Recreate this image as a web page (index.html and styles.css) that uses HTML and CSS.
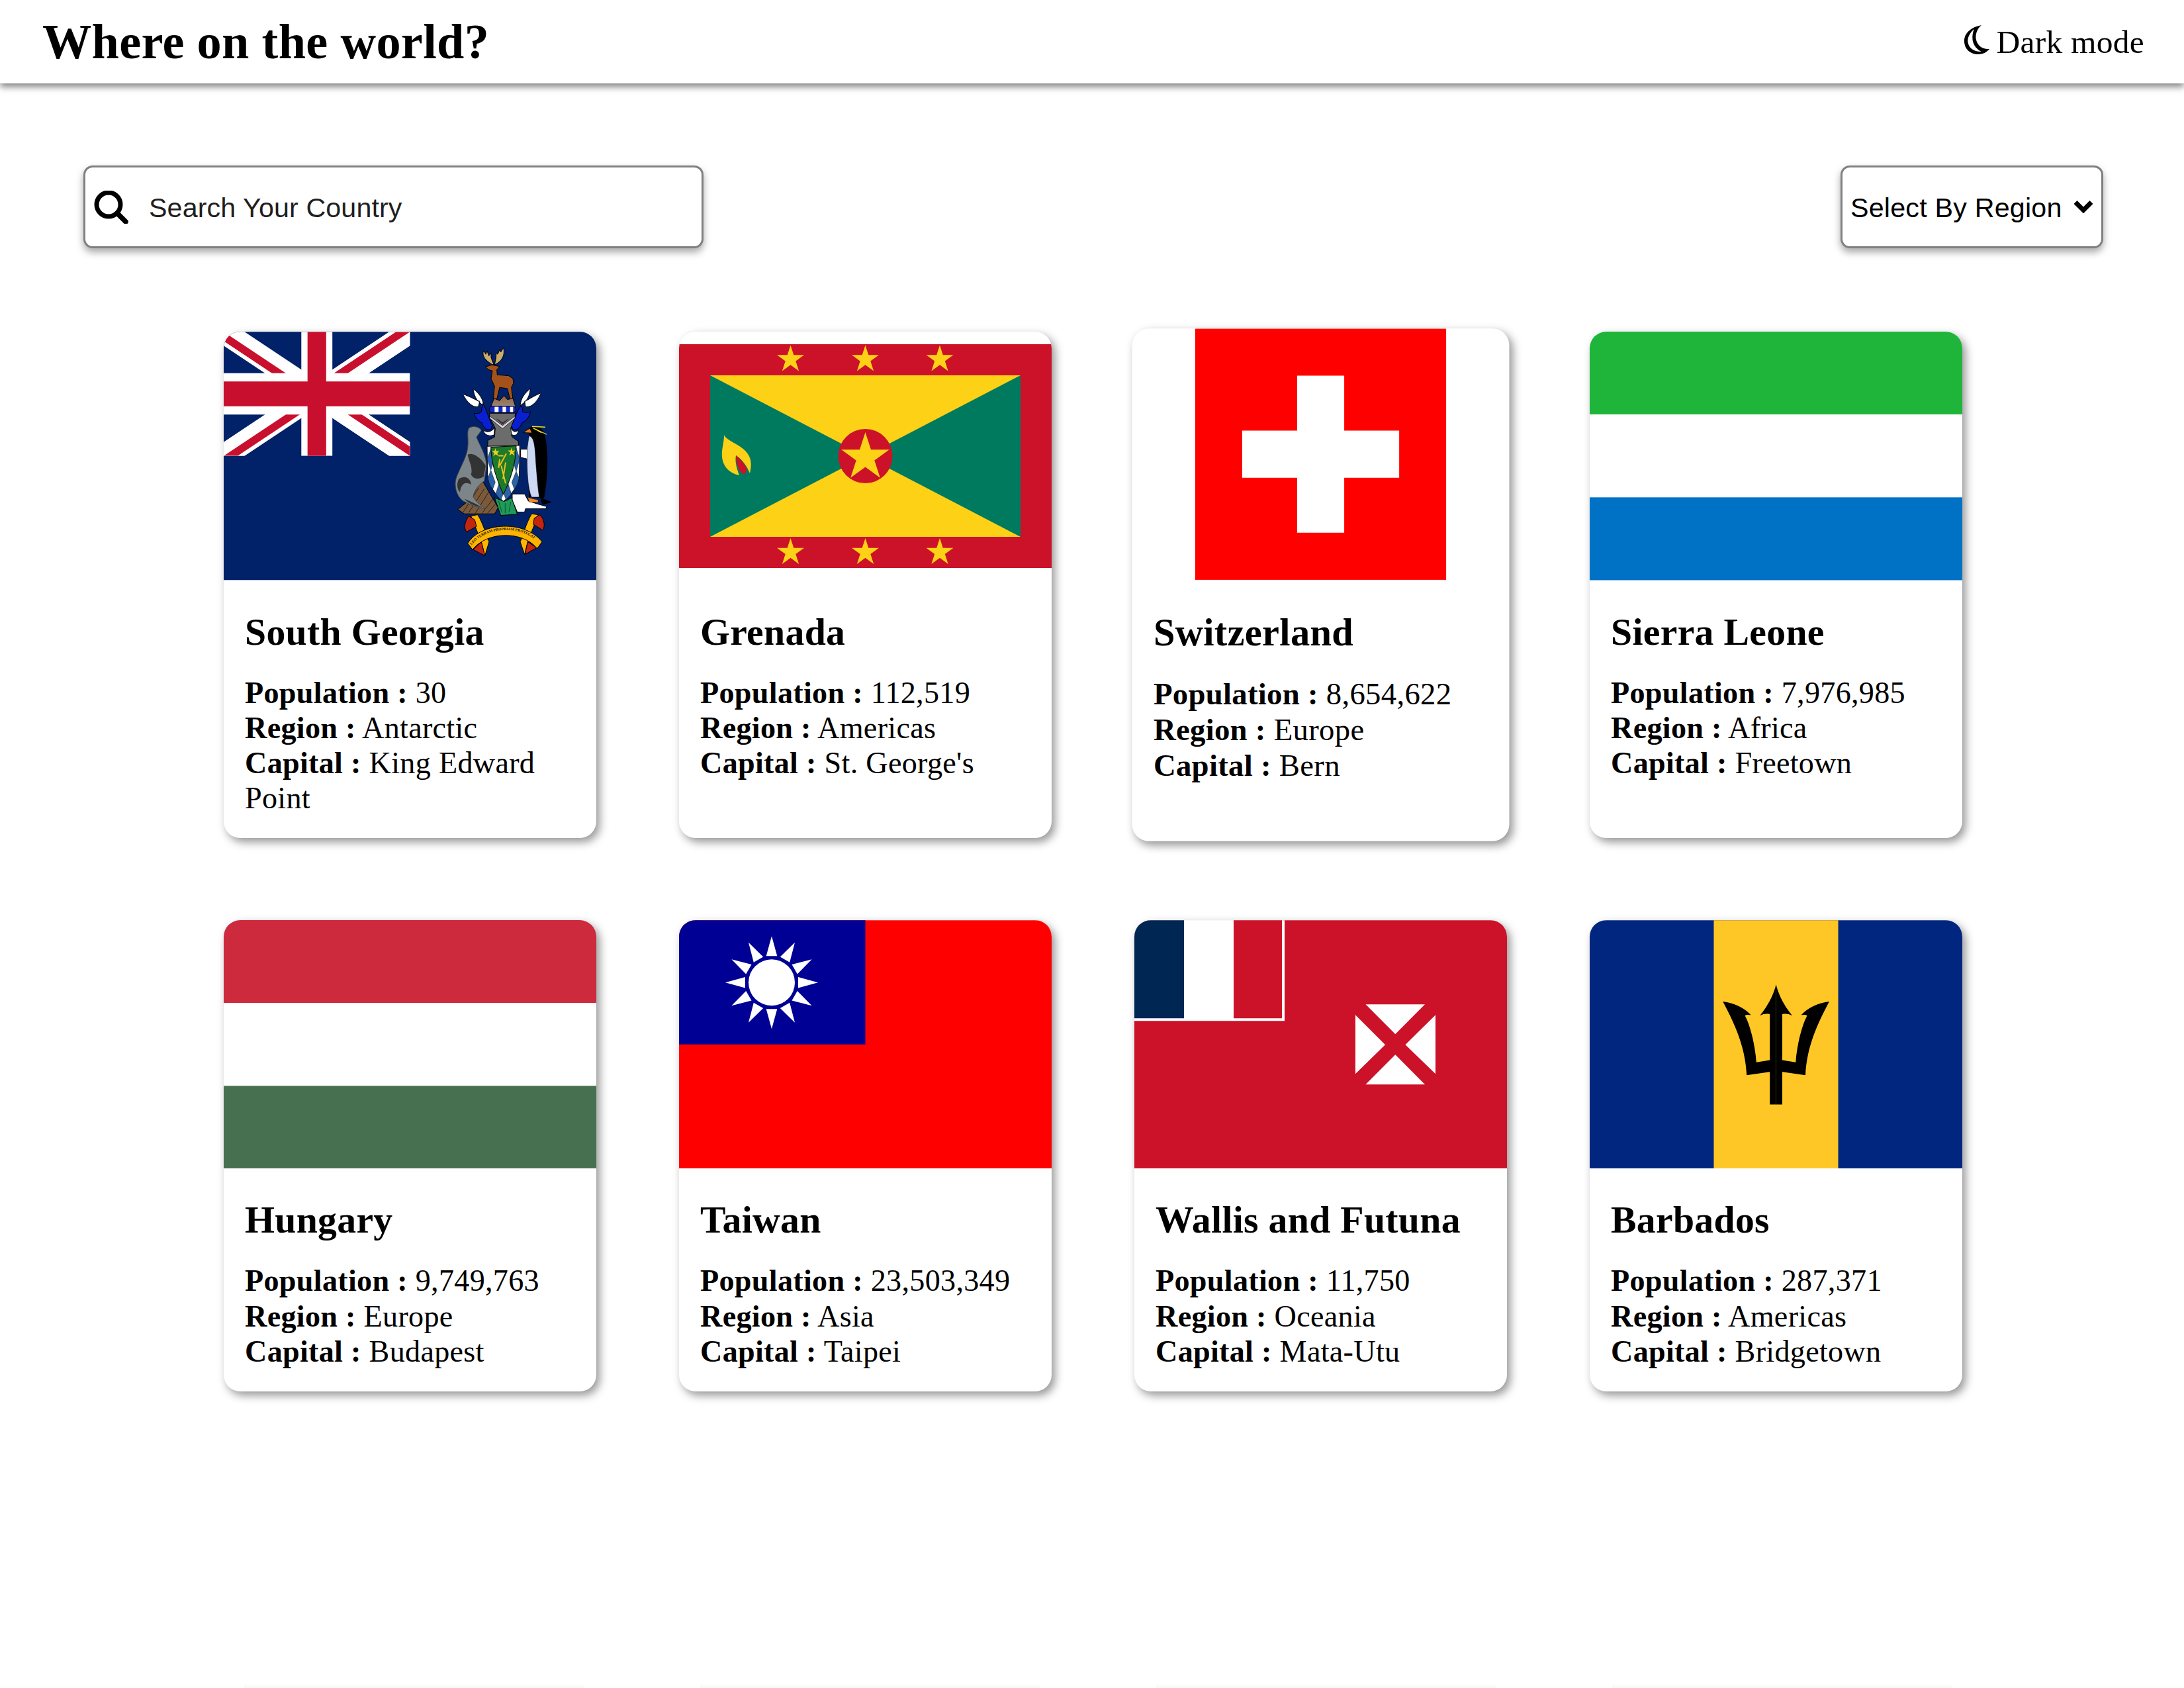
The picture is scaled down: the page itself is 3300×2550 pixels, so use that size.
FILE: index.html
```html
<!DOCTYPE html>
<html lang="en">
<head>
<meta charset="utf-8">
<title>Where on the world?</title>
<link rel="stylesheet" href="styles.css">
</head>
<body>
<header class="topbar">
  <h1 class="brand">Where on the world?</h1>
  <div class="mode">
    <svg class="moon" viewBox="0 0 38 44"><path d="M26 0C10 3 0 12 0 24c0 12 9 20 21 20 7 0 13-3 17-8-10 1-19-5-20.500-16C17 12 20 5 26 0z" fill="#000"/><path d="M15 6C7.500 12 4.500 20 5.500 26c1.500 9 9.500 14.500 20.500 14-7-3-12.500-10-13.500-18-.5-6 0-11 2.500-16z" fill="#fff"/></svg>
    <span>Dark mode</span>
  </div>
</header>

<section class="controls">
  <label class="search">
    <svg class="search-icon" viewBox="0 0 52 50"><circle cx="22" cy="21" r="18" fill="none" stroke="#000" stroke-width="7"/><path d="M35 34l13 13" stroke="#000" stroke-width="7.500" stroke-linecap="round"/></svg>
    <input class="search-input" type="text" placeholder="Search Your Country">
  </label>
  <div class="region">
    <select class="region-select"><option>Select By Region</option></select>
    <svg class="chevron" viewBox="0 0 30 20"><path d="M3 3.500l12 12 12-12" fill="none" stroke="#000" stroke-width="7"/></svg>
  </div>
</section>

<main class="grid">
  <article class="card">
    <div class="flag">
      <svg class="flag-wide" viewBox="0 0 563 375">
        <defs>
          <clipPath id="ujs"><path d="M0 0v30h60V0z"/></clipPath>
          <clipPath id="ujt"><path d="M30 15h30v15zv15H0zH0V0zV0h30z"/></clipPath>
          <path id="arc" d="M218 1000C280 915 450 905 525 995"/>
          <linearGradient id="mtn" x1="0" y1="0" x2="0" y2="1"><stop offset="0" stop-color="#a8602c"/><stop offset="1" stop-color="#8a8a8a"/></linearGradient>
          <clipPath id="shield"><path d="M288 552L436 548 434 680C430 730 400 770 362 802 325 770 295 730 290 680z"/></clipPath>
        </defs>
        <rect width="563" height="375" fill="#012169"/>
        <svg x="0" y="0" width="281.500" height="187.500" viewBox="0 0 60 30" preserveAspectRatio="none">
          <g clip-path="url(#ujs)">
            <path d="M0 0l60 30M60 0L0 30" stroke="#fff" stroke-width="6"/>
            <path d="M0 0l60 30M60 0L0 30" clip-path="url(#ujt)" stroke="#c8102e" stroke-width="4"/>
            <path d="M30 0v30M0 15h60" stroke="#fff" stroke-width="10"/>
            <path d="M30 0v30M0 15h60" stroke="#c8102e" stroke-width="6"/>
          </g>
        </svg>
        <g transform="translate(302 -11) scale(.3333)" stroke="#000" stroke-width="3" stroke-linejoin="round">
          <path d="M312 182C285 165 262 145 272 118L282 135 288 120 296 142 306 128 306 150 318 180zM322 182C352 170 372 140 362 105L350 125 346 112 336 135 330 128 328 152z" fill="#c9ad6e"/>
          <path d="M280 192L310 183 345 190 332 205 334 228 385 232 405 245 408 265 398 285 405 338 392 338 380 290 345 285 332 338 316 338 322 280 306 245 312 210 295 205z" fill="#a3521c"/>
          <path d="M305 372L320 335 345 345 365 322 380 340 405 335 418 376z" fill="url(#mtn)"/>
          <path d="M178 315C215 328 240 345 255 348L248 372C222 378 195 350 178 315zM225 292C250 310 270 335 272 368L252 352C235 335 228 315 225 292z" fill="#fff"/>
          <path d="M533 310C496 325 470 345 458 348L462 372C490 378 515 350 533 310zM484 290C460 310 440 335 438 368L458 352C475 335 482 315 484 290z" fill="#fff"/>
          <path d="M268 358C285 380 295 430 312 458L305 475C285 482 270 465 264 445 250 440 235 425 229 403 245 405 255 402 262 396z" fill="#0b1fd2"/>
          <path d="M445 368C425 380 415 430 398 458L405 475C425 482 440 465 446 445 460 440 478 425 485 395 470 400 458 400 450 396z" fill="#0b1fd2"/>
          <path d="M268 478C285 490 305 490 322 468L320 500C300 508 280 505 268 478zM432 478C418 490 405 490 392 462L395 495C410 508 425 505 432 478z" fill="#fff"/>
          <path d="M298 402H416L414 420 395 470 400 508 430 530V552H290L292 525 322 510 325 470 300 420z" fill="#6c6c6c"/>
          <path d="M300 415L358 458 414 415 414 425 358 472 300 425z" fill="#d4d4d4" stroke-width="2"/>
          <path d="M332 428L358 445 385 428 358 452z" fill="#5a1a60" stroke-width="1"/>
          <rect x="298" y="370" width="120" height="30" rx="14" fill="#1526c8"/>
          <path d="M322 373h18v24h-18zM358 373h16v24h-16zM392 373h14v24h-14z" fill="#fff" stroke="none"/>
          <path d="M155 838L215 790 262 700 338 830 322 858 185 858z" fill="#7b5a3c"/>
          <path d="M180 850L250 740M205 852L275 745M235 855L295 760M265 855L315 790M290 855L325 815" fill="none" stroke-width="2"/>
          <path d="M205 470C225 455 255 465 262 480L240 510C250 540 285 590 285 640L275 710C255 720 230 750 225 780 240 810 270 825 280 835 240 830 210 815 180 800 150 780 135 730 150 690 170 640 195 600 200 560 205 520 195 490 205 470z" fill="#7c868a" stroke="#444"/>
          <path d="M200 590C225 575 265 610 282 640L272 690C255 700 230 705 215 680 225 650 205 620 200 590zM160 700C190 680 215 700 215 725 190 710 170 720 165 760 150 745 150 720 160 700zM185 790C210 800 240 815 270 830 235 825 200 810 185 790z" fill="#333" stroke="none"/>
          <path d="M288 552L436 548 434 680C430 730 400 770 362 802 325 770 295 730 290 680z" fill="#fff"/>
          <g clip-path="url(#shield)" fill="#2a62a8" stroke="#111" stroke-width="1.500">
            <path d="M305 565L322 610 305 660 288 610zM420 560L436 610 420 665 402 610zM305 660L325 715 305 770 285 715zM420 665L440 715 420 770 400 715zM345 710L362 765 345 810 328 765zM380 710L397 765 380 810 363 765z"/>
          </g>
          <path d="M305 556L420 550C418 640 390 710 362 770 335 710 308 640 305 556z" fill="#1c7a2a"/>
          <path d="M325 560l5 14 14-2-10 10 6 14-13-8-11 8 4-14-11-9 13 0zM398 558l5 14 14-2-10 10 6 14-13-8-11 8 4-14-11-9 13 0z" fill="#f0d020" stroke="none"/>
          <path d="M340 595h22M375 585L345 640M372 625L360 700M352 640L372 720M345 610L340 650" fill="none" stroke="#e8c020" stroke-width="6"/>
          <path d="M322 785L365 802 400 785 425 860 350 865z" fill="#1f9a58"/>
          <path d="M340 800l15 50M370 810l0 45M395 805l-8 45" fill="none" stroke="#0d5030" stroke-width="3"/>
          <path d="M402 768H458L475 800 522 815 558 825 555 835H462L458 850H425L402 795z" fill="#fff"/>
          <path d="M440 565H472V610L440 602z" fill="#fff"/>
          <path d="M480 470C500 455 535 465 545 490 565 560 565 680 545 785L480 780C475 700 465 600 480 500z" fill="#000"/>
          <path d="M478 505C500 510 505 540 510 640 515 700 520 760 525 782H490C470 740 468 640 470 560z" fill="#cdd8f5" stroke-width="1.500"/>
          <path d="M450 490L482 470 492 492z" fill="#e87a1e"/>
          <path d="M492 462L552 465M495 468L558 498M498 470L535 490" fill="none" stroke="#f2e020" stroke-width="4"/>
          <path d="M472 783L495 790 520 795 518 806 480 805z" fill="#f08a20" stroke-width="1"/>
          <path d="M530 785L578 805 540 815z" fill="#000"/>
          <path d="M215 868L245 862C270 900 285 960 297 985L278 1048 262 985z" fill="#ffb400"/>
          <path d="M205 868C185 895 182 925 195 940L240 915 232 885z" fill="#c2260e"/>
          <path d="M225 1020L262 985 278 1048z" fill="#c2260e"/>
          <path d="M520 862L490 858C465 900 450 960 438 985L458 1042 472 985z" fill="#ffb400"/>
          <path d="M528 862C548 885 552 915 540 932L497 905 502 878z" fill="#c2260e"/>
          <path d="M512 1012L472 985 460 1042z" fill="#c2260e"/>
          <path d="M200 992C260 895 460 885 537 985L515 1015C450 935 290 935 222 1020z" fill="#ffb400"/>
          <text class="motto" stroke="none"><textPath href="#arc">LEO TERRAM PROPRIAM PROTEGAT</textPath></text>
        </g>
      </svg>
    </div>
    <div class="info">
      <h2 class="name">South Georgia</h2>
      <p class="facts"><b>Population :</b> 30<br><b>Region :</b> Antarctic<br><b>Capital :</b> King Edward Point</p>
    </div>
  </article>

  <article class="card">
    <div class="flag">
      <svg class="flag-grenada" viewBox="0 0 563 338">
        <defs><polygon id="gstar" points="0,-1 .2245,-.309 .9511,-.309 .3633,.118 .5878,.809 0,.382 -.5878,.809 -.3633,.118 -.9511,-.309 -.2245,-.309"/></defs>
        <rect width="563" height="338" fill="#cc1229"/>
        <rect x="47" y="47" width="469" height="244" fill="#007a5e"/>
        <path d="M47 47H516L47 291H516z" fill="#fcd116"/>
        <circle cx="281.500" cy="169" r="41" fill="#cc1229"/>
        <use href="#gstar" fill="#fcd116" transform="translate(281.500 171) scale(38)"/>
        <g fill="#fcd116">
          <use href="#gstar" transform="translate(168.500 23) scale(21.500)"/>
          <use href="#gstar" transform="translate(281.500 23) scale(21.500)"/>
          <use href="#gstar" transform="translate(394 23) scale(21.500)"/>
          <use href="#gstar" transform="translate(168.500 314.500) scale(21.500)"/>
          <use href="#gstar" transform="translate(281.500 314.500) scale(21.500)"/>
          <use href="#gstar" transform="translate(394 314.500) scale(21.500)"/>
        </g>
        <path d="M68 137C72 146 90 150 101 162 110 172 110 182 107 195 103 186 98 176 86 168 84 178 88 190 91 198 76 195 66 184 65 170 64 158 68 150 68 137z" fill="#fcd116"/>
        <path d="M86 168C94 174 100 182 103 190L98 197 92 192C88 185 86 176 86 168z" fill="#cc1229"/>
      </svg>
    </div>
    <div class="info">
      <h2 class="name">Grenada</h2>
      <p class="facts"><b>Population :</b> 112,519<br><b>Region :</b> Americas<br><b>Capital :</b> St. George's</p>
    </div>
  </article>

  <article class="card card-hover">
    <div class="flag">
      <svg class="flag-square" viewBox="0 0 32 32">
        <rect width="32" height="32" fill="#f00"/>
        <path d="M13 6h6v7h7v6h-7v7h-6v-7H6v-6h7z" fill="#fff"/>
      </svg>
    </div>
    <div class="info">
      <h2 class="name">Switzerland</h2>
      <p class="facts"><b>Population :</b> 8,654,622<br><b>Region :</b> Europe<br><b>Capital :</b> Bern</p>
    </div>
  </article>

  <article class="card">
    <div class="flag">
      <svg class="flag-wide" viewBox="0 0 3 3" preserveAspectRatio="none">
        <rect width="3" height="1" fill="#1eb53a"/>
        <rect y="1" width="3" height="1" fill="#fff"/>
        <rect y="2" width="3" height="1" fill="#0072c6"/>
      </svg>
    </div>
    <div class="info">
      <h2 class="name">Sierra Leone</h2>
      <p class="facts"><b>Population :</b> 7,976,985<br><b>Region :</b> Africa<br><b>Capital :</b> Freetown</p>
    </div>
  </article>

  <article class="card">
    <div class="flag">
      <svg class="flag-wide" viewBox="0 0 3 3" preserveAspectRatio="none">
        <rect width="3" height="1" fill="#cd2a3e"/>
        <rect y="1" width="3" height="1" fill="#fff"/>
        <rect y="2" width="3" height="1" fill="#477050"/>
      </svg>
    </div>
    <div class="info">
      <h2 class="name">Hungary</h2>
      <p class="facts"><b>Population :</b> 9,749,763<br><b>Region :</b> Europe<br><b>Capital :</b> Budapest</p>
    </div>
  </article>

  <article class="card">
    <div class="flag">
      <svg class="flag-wide" viewBox="0 0 563 375">
        <defs><polygon id="ray" points="0,-70 8.300,-40 -8.300,-40"/></defs>
        <rect width="563" height="375" fill="#fe0000"/>
        <rect width="281.500" height="187.500" fill="#000095"/>
        <g transform="translate(140 94)" fill="#fff">
          <use href="#ray"/>
          <use href="#ray" transform="rotate(30)"/>
          <use href="#ray" transform="rotate(60)"/>
          <use href="#ray" transform="rotate(90)"/>
          <use href="#ray" transform="rotate(120)"/>
          <use href="#ray" transform="rotate(150)"/>
          <use href="#ray" transform="rotate(180)"/>
          <use href="#ray" transform="rotate(210)"/>
          <use href="#ray" transform="rotate(240)"/>
          <use href="#ray" transform="rotate(270)"/>
          <use href="#ray" transform="rotate(300)"/>
          <use href="#ray" transform="rotate(330)"/>
          <circle r="35"/>
        </g>
      </svg>
    </div>
    <div class="info">
      <h2 class="name">Taiwan</h2>
      <p class="facts"><b>Population :</b> 23,503,349<br><b>Region :</b> Asia<br><b>Capital :</b> Taipei</p>
    </div>
  </article>

  <article class="card">
    <div class="flag">
      <svg class="flag-wide" viewBox="0 0 563 375">
        <rect width="563" height="375" fill="#cc1229"/>
        <rect width="227" height="152" fill="#fff"/>
        <rect width="75" height="148" fill="#002654"/>
        <rect x="75" width="75" height="148" fill="#fff"/>
        <rect x="150" width="73" height="148" fill="#cc1229"/>
        <path d="M349.500 127H439L394.300 172zM349.500 248H439L394.300 203zM334 143V232L379 188zM455 143V232L409.500 188z" fill="#fff"/>
      </svg>
    </div>
    <div class="info">
      <h2 class="name">Wallis and Futuna</h2>
      <p class="facts"><b>Population :</b> 11,750<br><b>Region :</b> Oceania<br><b>Capital :</b> Mata-Utu</p>
    </div>
  </article>

  <article class="card">
    <div class="flag">
      <svg class="flag-wide" viewBox="0 0 563 375">
        <defs>
          <path id="trident" d="M281.600 96.700C286 115 295 130 306 144 300 141 296 141 291 141.700V211.300L311.400 214.500C313 190 320 160 328.600 144 326 142 322 143 319.600 143 330 132 345 125 362 122.700 345 155 328 190 326 234L291 229V278.300H281.600z"/>
        </defs>
        <rect width="563" height="375" fill="#00267f"/>
        <rect x="187.500" width="188" height="375" fill="#ffc726"/>
        <use href="#trident"/>
        <use href="#trident" transform="translate(563.200 0) scale(-1 1)"/>
      </svg>
    </div>
    <div class="info">
      <h2 class="name">Barbados</h2>
      <p class="facts"><b>Population :</b> 287,371<br><b>Region :</b> Americas<br><b>Capital :</b> Bridgetown</p>
    </div>
  </article>
</main>

<div class="ghost-row" aria-hidden="true">
  <div class="ghost"></div>
  <div class="ghost"></div>
  <div class="ghost"></div>
  <div class="ghost"></div>
</div>
</body>
</html>
```
FILE: styles.css
```css
html, body {
  margin: 0;
  padding: 0;
  height: 2550px;
  overflow: hidden;
  background: #fff;
  color: #000;
  font-family: "Liberation Serif", "Times New Roman", serif;
}

.topbar {
  display: flex;
  align-items: center;
  justify-content: space-between;
  height: 126px;
  padding: 0 60px 0 64px;
  background: #fff;
  box-shadow: 0 5px 10px rgba(0, 0, 0, .5);
}

.brand {
  margin: 0;
  font-size: 74.25px;
  font-weight: 700;
  letter-spacing: .33px;
}

.mode {
  display: flex;
  align-items: center;
  gap: 10px;
  font-size: 49.5px;
  letter-spacing: .25px;
}

.moon {
  width: 38px;
  height: 44px;
  margin-top: -7px;
}

.controls {
  display: flex;
  justify-content: space-between;
  height: 125px;
  margin-top: 124px;
  padding: 0 122px 0 126px;
  font-family: "Liberation Sans", Arial, sans-serif;
}

.search {
  display: flex;
  align-items: center;
  gap: 31px;
  box-sizing: border-box;
  width: 937px;
  padding-left: 13px;
  background: #fff;
  border: 3px solid #808080;
  border-radius: 14px;
  box-shadow: 0 6px 12px rgba(0, 0, 0, .35);
}

.search-icon {
  flex: none;
  width: 52px;
  height: 50px;
}

.search-input {
  flex: 1;
  min-width: 0;
  padding: 3px 0 0;
  border: 0;
  outline: 0;
  background: transparent;
  font-family: inherit;
  font-size: 41.25px;
  letter-spacing: .1px;
}

.search-input::placeholder {
  color: #1f1f1f;
  opacity: 1;
}

.region {
  position: relative;
  box-sizing: border-box;
  width: 397px;
  background: #fff;
  border: 3px solid #808080;
  border-radius: 14px;
  box-shadow: 0 6px 12px rgba(0, 0, 0, .35);
}

.region-select {
  appearance: none;
  display: block;
  width: 100%;
  height: 100%;
  padding: 3px 0 0 12px;
  border: 0;
  outline: 0;
  background: transparent;
  color: #000;
  font-family: inherit;
  font-size: 41.25px;
  letter-spacing: .2px;
}

.chevron {
  position: absolute;
  top: 50%;
  right: 12px;
  width: 30px;
  height: 20px;
  margin-top: -11px;
}

.grid {
  display: grid;
  grid-template-columns: repeat(4, 563px);
  column-gap: 125px;
  row-gap: 124px;
  margin-top: 126px;
  padding-left: 338px;
}

.card {
  overflow: hidden;
  background: #fff;
  border-radius: 25px;
  box-shadow: 5px 6px 14px rgba(0, 0, 0, .42);
}

.card-hover {
  transform: scale(1.0124);
}

.flag {
  display: flex;
  align-items: center;
  justify-content: center;
  height: 375.5px;
}

.flag svg {
  display: block;
}

.flag-wide {
  width: 563px;
  height: 375.5px;
}

.flag-grenada {
  width: 563px;
  height: 338px;
}

.flag-square {
  width: 375px;
  height: 375px;
}

.motto {
  font-family: "Liberation Serif", serif;
  font-size: 17px;
  font-weight: 700;
  fill: #111;
}

.info {
  padding: 45px 32px 33.3px;
}

.name {
  margin: 0 0 33px;
  font-size: 57.75px;
  font-weight: 700;
  letter-spacing: .3px;
}

.facts {
  margin: 0;
  font-size: 46.2px;
  line-height: 53.3px;
  letter-spacing: .28px;
}

.ghost-row {
  display: grid;
  grid-template-columns: repeat(4, 513px);
  column-gap: 176px;
  margin-top: 441px;
  padding-left: 369px;
}

.ghost {
  height: 7px;
  background: linear-gradient(rgba(0, 0, 0, 0), rgba(0, 0, 0, .03));
}
```
